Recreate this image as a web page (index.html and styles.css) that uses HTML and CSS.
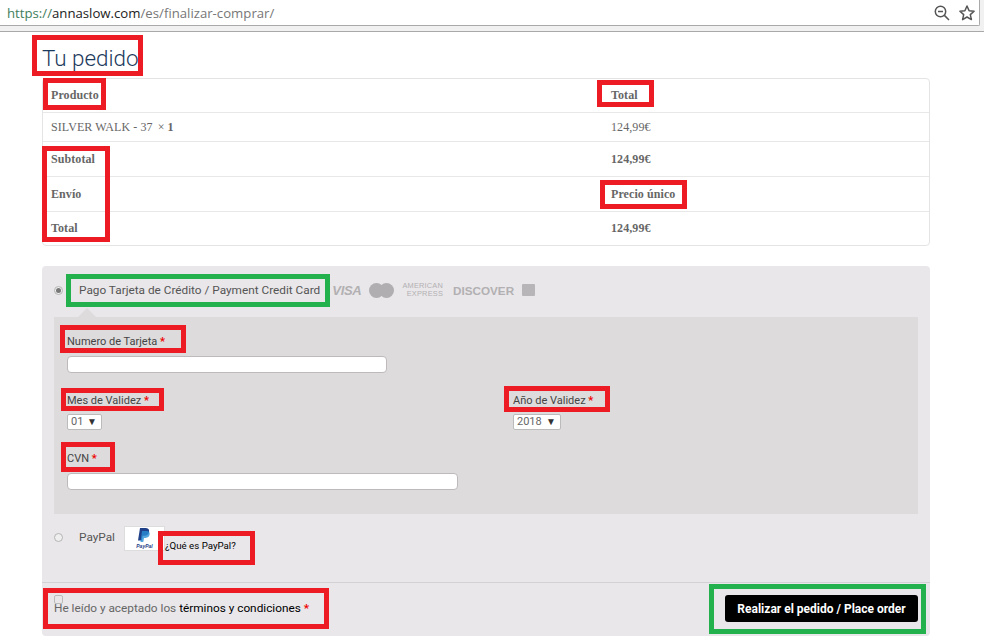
FILE: index.html
```html
<!DOCTYPE html>
<html lang="es">
<head>
<meta charset="utf-8">
<title>Finalizar comprar</title>
<link rel="stylesheet" href="styles.css">
</head>
<body>
<header class="chrome">
  <div class="omnibox">
    <div class="url"><span class="scheme">https://</span><span class="host">annaslow.com</span>/es/finalizar-comprar/</div>
    <svg class="tool" width="18" height="18" viewBox="0 0 18 18" fill="none" stroke="#555" stroke-width="1.5"><circle cx="7.5" cy="7.5" r="5.2"/><path d="M5 7.5h5M11.4 11.4l4.600 4.600"/></svg>
    <svg class="tool" width="18" height="18" viewBox="0 0 18 18" fill="none" stroke="#555" stroke-width="1.500" stroke-linejoin="round"><path d="M9 2l2.100 4.700 5 .5-3.800 3.400 1.100 5L9 13l-4.400 2.600 1.100-5L1.900 7.200l5-.5z"/></svg>
  </div>
</header>

<main class="page">
  <h2 class="title">Tu pedido</h2>
  <table class="order">
    <tr class="h33"><th class="c1">Producto</th><th>Total</th></tr>
    <tr class="h29"><td class="c1">SILVER WALK - 37 <span class="qty">×</span><b>1</b></td><td>124,99€</td></tr>
    <tr class="h35"><th class="c1">Subtotal</th><th>124,99€</th></tr>
    <tr class="h35"><th class="c1">Envío</th><th>Precio único</th></tr>
    <tr class="h34"><th class="c1">Total</th><th>124,99€</th></tr>
  </table>

  <section class="payment">
    <div class="method first">
      <span class="radio on"></span>
      <span class="method-name">Pago Tarjeta de Crédito / Payment Credit Card</span>
      <span class="cards">
        <span class="visa">VISA</span>
        <span class="mc"><i></i><i></i></span>
        <span class="amex">AMERICAN<br>EXPRESS</span>
        <span class="disc">DISCOVER</span>
        <span class="jcb"></span>
      </span>
    </div>
    <div class="panel">
      <label class="lbl">Numero de Tarjeta <em>*</em></label>
      <div class="input w320"></div>
      <div class="two">
        <div>
          <label class="lbl">Mes de Validez <em>*</em></label>
          <div class="select w35">01<span class="caret">▼</span></div>
        </div>
        <div>
          <label class="lbl">Año de Validez <em>*</em></label>
          <div class="select w48">2018<span class="caret">▼</span></div>
        </div>
      </div>
      <label class="lbl cvn">CVN <em>*</em></label>
      <div class="input w391"></div>
    </div>
    <div class="method second">
      <span class="radio"></span>
      <span class="method-name">PayPal</span>
      <span class="pp-logo">
        <svg width="14" height="15" viewBox="0 0 14 15"><path fill="#1f3f88" d="M3 0h5.500c2.500 0 4 1.300 3.600 3.700-.4 2.600-2.200 4-4.700 4H5.600L4.800 12.500H1z"/><path fill="#2a8fd6" d="M5 3h5c1.700.2 3 1.300 2.700 3.300-.3 2.300-2 3.600-4.200 3.600H7l-.7 4H3.500z" opacity=".8"/></svg>
        <span class="pp-word">PayPal</span>
      </span>
      <a class="pp-what">¿Qué es PayPal?</a>
    </div>
    <div class="place">
      <div class="terms"><span class="check"></span>He leído y aceptado los <a>términos y condiciones</a> <em>*</em></div>
      <button class="order-btn">Realizar el pedido / Place order</button>
    </div>
  </section>
</main>

<div class="mark red m-title"></div>
<div class="mark red m-prod"></div>
<div class="mark red m-total"></div>
<div class="mark red m-precio"></div>
<div class="mark red m-sub"></div>
<div class="mark green m-pago"></div>
<div class="mark red m-num"></div>
<div class="mark red m-mes"></div>
<div class="mark red m-ano"></div>
<div class="mark red m-cvn"></div>
<div class="mark red m-pp"></div>
<div class="mark red m-terms"></div>
<div class="mark green m-btn"></div>
</body>
</html>
```

FILE: styles.css
```css
* { box-sizing: border-box; }
html, body { margin: 0; padding: 0; background: #fff; }
body { width: 984px; height: 644px; overflow: hidden; position: relative; font-family: Roboto, sans-serif; }

.chrome { height: 32px; background: #f1f1f1; border-bottom: 1px solid #a9a9a9; padding-right: 4px; padding-bottom: 5px; }
.omnibox { height: 26px; background: #fff; border: 1px solid #a9a9a9; border-width: 0 1px 1px 0; border-bottom-right-radius: 2px; display: flex; align-items: center; padding: 0 3px 0 7px; gap: 7px; }
.url { flex: 1; font: 13.2px "Open Sans", sans-serif; color: #777; }
.scheme { color: #3f7d5c; }
.host { color: #222; }
.tool { flex: none; }

.page { padding: 0 54px 0 42px; }
.title { margin: 0; padding-top: 10px; height: 46px; font: 300 22.4px/32px Roboto, sans-serif; color: #1c3a5c; }

.order { width: 888px; border: 1px solid #e4e4e4; border-radius: 4px; border-collapse: separate; border-spacing: 0; font: 12px "Liberation Serif", serif; color: #666; table-layout: fixed; }
.order th, .order td { text-align: left; padding: 0 0 0 12px; border-top: 1px solid #e8e8e8; letter-spacing: .08px; }
.order tr:first-child th { border-top: 0; }
.order .c1 { width: 556px; padding-left: 8px; }
.order td b { font-weight: bold; margin-left: 3px; }
.h33 { height: 33px; }
.h34 { height: 34px; }
.h29 { height: 29px; }
.h35 { height: 35px; }
.qty { color: #666; margin-left: 2px; }

.payment { margin-top: 20px; height: 370px; background: #e9e7ea; border-radius: 4px; padding: 0 12px; position: relative; }
.method { display: flex; align-items: center; color: #555; font-size: 11.8px; }
.method.first { height: 51px; padding-bottom: 3px; }
.radio { width: 9px; height: 9px; border-radius: 50%; border: 1px solid #b5b5b5; background: #efefef; margin-right: 16px; flex: none; position: relative; }
.radio.on::after { content: ""; position: absolute; left: 1px; top: 1px; width: 5px; height: 5px; border-radius: 50%; background: #777; }
.method-name { margin-left: 0; }

.cards { display: flex; align-items: center; margin-left: 12px; color: #b2b0b2; gap: 8px; }
.visa { font: italic bold 13px "Liberation Sans", sans-serif; letter-spacing: -.3px; }
.mc { display: flex; width: 25px; }
.mc i { width: 15px; height: 15px; border-radius: 50%; background: #b0aeb0; flex: none; }
.mc i + i { margin-left: -5px; }
.amex { font: 7.4px/8px "Liberation Sans", sans-serif; text-align: right; letter-spacing: .2px; }
.disc { font: bold 11.7px "Liberation Sans", sans-serif; margin-left: 2px; }
.jcb { width: 13px; height: 12px; background: #b7b5b7; border-radius: 1px; }

.panel { height: 197px; background: #dddbdc; position: relative; padding: 17px 13px 0; }
.panel::before { content: ""; position: absolute; left: 24px; top: -9px; border: 9px solid transparent; border-top: 0; border-bottom-color: #dddbdc; }
.lbl { display: block; font-size: 11px; line-height: 16px; color: #444; height: 16px; }
.lbl em, .terms em { color: #e00; font-style: normal; font-weight: bold; }
.input { height: 17px; margin-top: 6px; background: #fff; border: 1px solid #bdb9bc; border-radius: 4px; }
.w320 { width: 320px; }
.w391 { width: 391px; }
.two { display: grid; grid-template-columns: 446px 1fr; margin-top: 20px; height: 51px; }
.select { height: 16px; margin-top: 5px; background: #fff; border: 1px solid #bbb; border-radius: 2px; font-size: 11px; line-height: 14px; color: #666; padding-left: 3px; display: flex; justify-content: space-between; padding-right: 4px; }
.w35 { width: 35px; }
.w48 { width: 48px; }
.caret { font-size: 10px; color: #333; }
.cvn { margin-top: 7px; }

.method.second { height: 65px; padding-bottom: 19px; }
.pp-logo { width: 41px; height: 25px; margin-top: 2px; background: #fff; border: 1px solid #ddd; margin-left: 9px; display: flex; flex-direction: column; align-items: center; justify-content: center; flex: none; }
.pp-word { font: italic bold 5px/6px "Liberation Sans", sans-serif; color: #1f3f88; }
.pp-what { font-size: 9.7px; color: #000; margin-top: 16px; }

.place { position: absolute; left: 0; right: 0; top: 316px; height: 54px; border-top: 1px solid #d3d1d3; display: flex; justify-content: space-between; align-items: flex-start; padding: 12px 12px 0; }
.terms { font-size: 11.8px; color: #666; position: relative; margin-top: 6px; line-height: 14px; }
.terms a { color: #000; }
.check { position: absolute; left: 0; top: -6px; width: 9px; height: 9px; border: 1px solid #bbb; border-radius: 2px; background: #e9e7ea; }
.order-btn { width: 193px; height: 27px; background: #000; color: #fff; border: 0; border-radius: 3px; font: bold 12px Roboto, sans-serif; padding: 0; }

.mark { position: absolute; border: 5px solid; pointer-events: none; }
.red { border-color: #ed1c24; }
.green { border-color: #22b14c; }
.m-title { left: 32px; top: 35px; width: 111px; height: 41px; }
.m-prod { left: 43px; top: 78px; width: 63px; height: 32px; }
.m-total { left: 597px; top: 80px; width: 57px; height: 27px; }
.m-precio { left: 600px; top: 180px; width: 87px; height: 29px; }
.m-sub { left: 42px; top: 146px; width: 68px; height: 96px; }
.m-pago { left: 66px; top: 274px; width: 264px; height: 33px; }
.m-num { left: 60px; top: 325px; width: 126px; height: 28px; }
.m-mes { left: 61px; top: 388px; width: 103px; height: 23px; }
.m-ano { left: 504px; top: 386px; width: 106px; height: 26px; }
.m-cvn { left: 61px; top: 442px; width: 54px; height: 30px; }
.m-pp { left: 158px; top: 531px; width: 97px; height: 34px; }
.m-terms { left: 43px; top: 588px; width: 286px; height: 41px; }
.m-btn { left: 709px; top: 584px; width: 217px; height: 50px; }
```
